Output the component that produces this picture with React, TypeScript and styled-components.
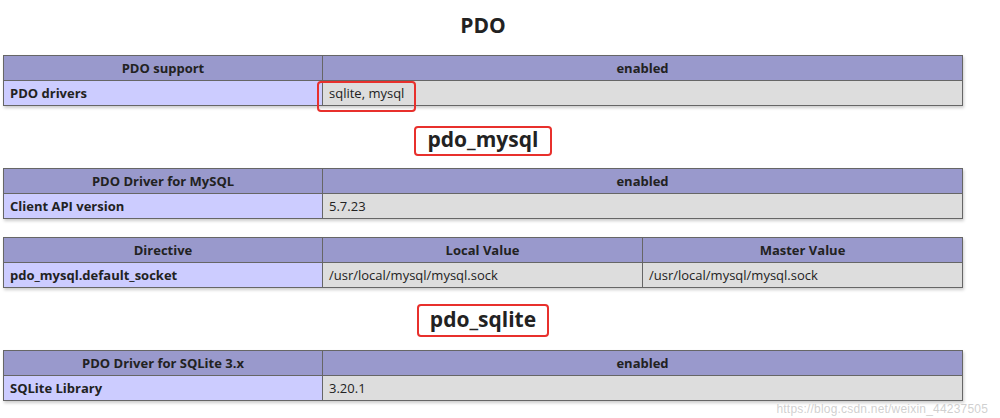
import * as React from 'react';
import styled, {createGlobalStyle} from 'styled-components';

const GlobalStyle = createGlobalStyle`
  html, body {
    margin: 0;
    padding: 0;
    background: #ffffff;
  }
  body {
    font-family: "Open Sans", "Noto Sans", "Liberation Sans", sans-serif;
    color: #222222;
  }
`;

const Page = styled.div`
  position: relative;
  width: 1000px;
  height: 418px;
  overflow: hidden;
  padding: 10px 0 0 3px;
  box-sizing: border-box;
`;

const Title = styled.h1`
  margin: 0;
  width: 960px;
  text-align: center;
  font-size: 21px;
  line-height: 30px;
  font-weight: 700;
`;

const HeadingRow = styled.div<{$top: number; $bottom: number}>`
  width: 960px;
  display: flex;
  justify-content: center;
  margin: ${p => p.$top}px 0 ${p => p.$bottom}px;
`;

const Heading = styled.h2<{$height: number; $width: number}>`
  margin: 0;
  box-sizing: border-box;
  height: ${p => p.$height}px;
  width: ${p => p.$width}px;
  border: 2px solid #e8302c;
  border-radius: 4px;
  display: flex;
  align-items: center;
  justify-content: center;
  font-size: 21px;
  line-height: 1;
  font-weight: 700;
  padding-bottom: 3px;
`;

const Table = styled.table<{$mt?: number}>`
  border-collapse: collapse;
  table-layout: fixed;
  width: 960px;
  margin-top: ${p => p.$mt ?? 0}px;
  box-shadow: 1px 2px 3px #cccccc;
  font-size: 13px;
  line-height: 16px;
`;

const Th = styled.th`
  background: #9999cc;
  border: 1px solid #666666;
  padding: 4px 6px;
  font-weight: 700;
  text-align: center;
  color: #222222;
`;

const Label = styled.td`
  background: #ccccff;
  border: 1px solid #666666;
  padding: 4px 6px;
  font-weight: 700;
  text-align: left;
`;

const Value = styled.td`
  position: relative;
  background: #dddddd;
  border: 1px solid #666666;
  padding: 4px 6px;
  text-align: left;
`;

const Highlight = styled.span`
  position: absolute;
  left: -6px;
  top: 0;
  width: 99px;
  height: 31px;
  box-sizing: border-box;
  border: 2px solid #e8302c;
  border-radius: 4px;
`;

const Watermark = styled.div`
  position: absolute;
  right: 12px;
  bottom: 2px;
  font-family: "Liberation Sans", sans-serif;
  font-size: 12px;
  color: rgba(200, 200, 200, 0.85);
  letter-spacing: 0.2px;
`;

function InfoTable({
  head,
  label,
  value,
  mark,
  mt,
}: {head: string; label: string; value: string; mark?: boolean; mt?: number}) {
  return (
    <Table $mt={mt}>
      <colgroup>
        <col style={{width: 319}}/>
        <col/>
      </colgroup>
      <tbody>
        <tr>
          <Th>{head}</Th>
          <Th>enabled</Th>
        </tr>
        <tr>
          <Label>{label}</Label>
          <Value>{value}{mark && <Highlight/>}</Value>
        </tr>
      </tbody>
    </Table>
  );
}

export default function App() {
  return (
    <Page>
      <GlobalStyle/>
      <Title>PDO</Title>
      <InfoTable mt={15} head="PDO support" label="PDO drivers" value="sqlite, mysql" mark/>

      <HeadingRow $top={20} $bottom={12}>
        <Heading $height={30} $width={138}>pdo_mysql</Heading>
      </HeadingRow>
      <InfoTable head="PDO Driver for MySQL" label="Client API version" value="5.7.23"/>

      <Table $mt={18}>
        <colgroup>
          <col style={{width: 319}}/>
          <col style={{width: 320}}/>
          <col/>
        </colgroup>
        <tbody>
          <tr>
            <Th>Directive</Th>
            <Th>Local Value</Th>
            <Th>Master Value</Th>
          </tr>
          <tr>
            <Label>pdo_mysql.default_socket</Label>
            <Value>/usr/local/mysql/mysql.sock</Value>
            <Value>/usr/local/mysql/mysql.sock</Value>
          </tr>
        </tbody>
      </Table>

      <HeadingRow $top={16} $bottom={13}>
        <Heading $height={33} $width={132}>pdo_sqlite</Heading>
      </HeadingRow>
      <InfoTable head="PDO Driver for SQLite 3.x" label="SQLite Library" value="3.20.1"/>

      <Watermark>https://blog.csdn.net/weixin_44237505</Watermark>
    </Page>
  );
}
